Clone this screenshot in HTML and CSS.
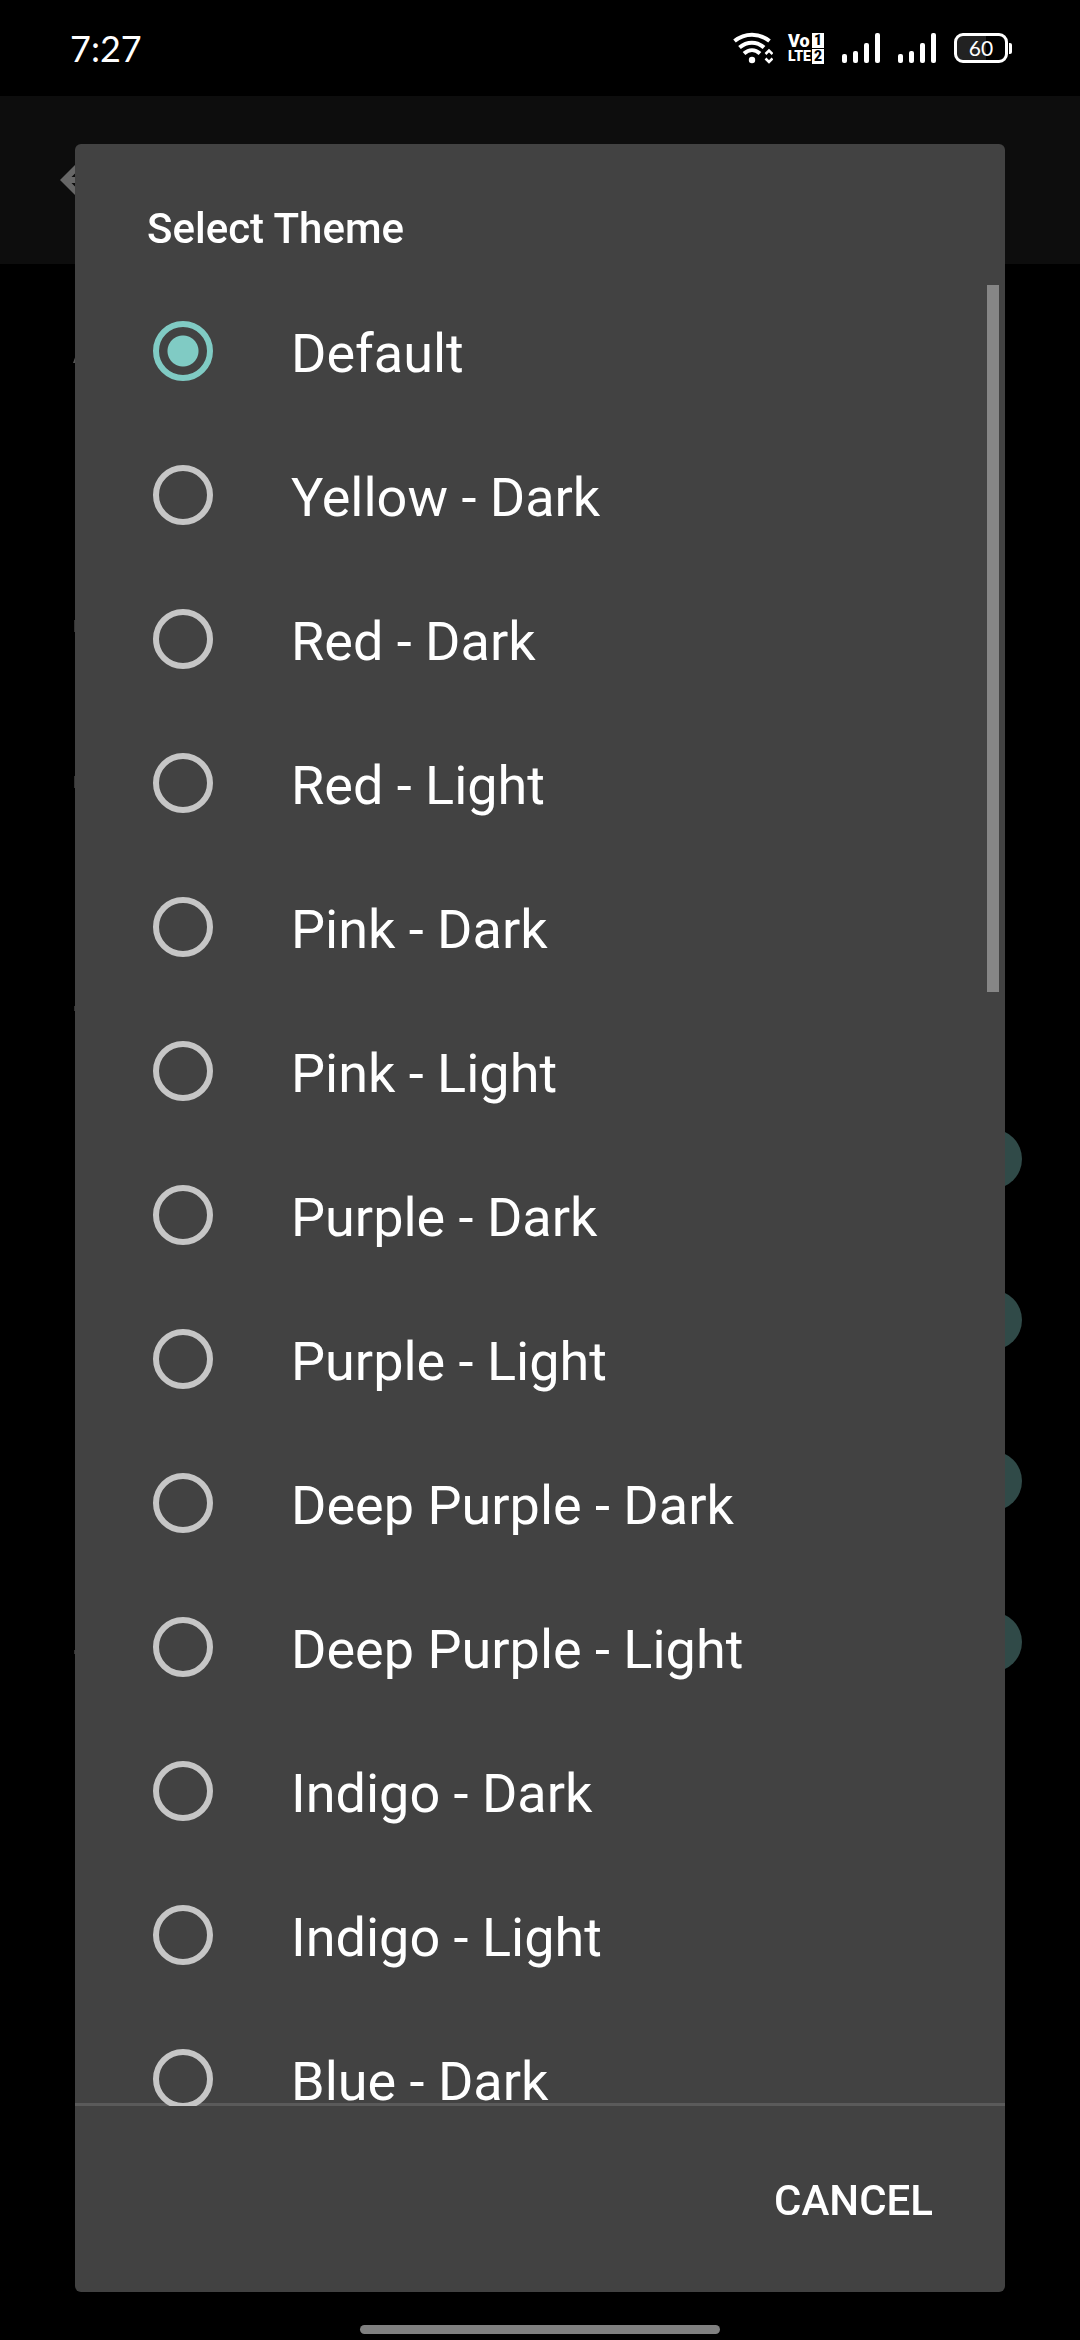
FILE: index.html
```html
<!DOCTYPE html>
<html lang="en">
<head>
<meta charset="utf-8">
<meta name="viewport" content="width=device-width, initial-scale=1">
<title>Select Theme</title>
<link rel="stylesheet" href="styles.css">
</head>
<body>
<div class="screen">
  <header class="status-bar">
    <span class="clock">7:27</span>
    <div class="status-icons">
      <svg class="wifi" width="40" height="32" viewBox="0 0 40 32" fill="none" stroke="#fff">
        <path d="M1.500 9C12 0.500 26 0.500 36.500 9M6.500 15.500C14 9 24 9 31 15.500M11 21.500C16 17 22 17 27 21.500" stroke-width="4"/>
        <circle cx="19" cy="28" r="3.200" fill="#fff" stroke="none"/>
        <path d="M32.500 22L36 18.500L39.500 22M32.500 26.500L36 30L39.500 26.500" stroke-width="2.500"/>
      </svg>
      <div class="volte">
        <span class="vo">Vo</span><span class="sim">1</span>
        <span>LTE</span><span class="sim">2</span>
      </div>
      <svg class="signal" width="38" height="30" viewBox="0 0 38 30" fill="#fff">
        <rect x="0" y="21" width="5" height="9" rx="2"/><rect x="11" y="18" width="5" height="12" rx="2"/><rect x="22" y="10" width="5" height="20" rx="2"/><rect x="33" y="0" width="5" height="30" rx="2"/>
      </svg>
      <svg class="signal" width="38" height="30" viewBox="0 0 38 30" fill="#fff">
        <rect x="0" y="21" width="5" height="9" rx="2"/><rect x="11" y="18" width="5" height="12" rx="2"/><rect x="22" y="10" width="5" height="20" rx="2"/><rect x="33" y="0" width="5" height="30" rx="2"/>
      </svg>
      <div class="battery"><span class="level">60</span></div>
    </div>
  </header>

  <div class="app-bar">
    <svg width="72" height="72" viewBox="0 0 24 24" fill="#666"><path d="M20 11H7.830l5.590-5.590L12 4l-8 8 8 8 1.410-1.410L7.830 13H20v-2z"/></svg>
  </div>
  <div class="settings">
    <svg width="4" height="1400" viewBox="0 0 4 1400" fill="#333"><path fill="#555" d="M0 99L4 88V99z"/><path d="M1 356h3v12H1zM1 512h3v12H1zM1 742h3v5H1zM1 1386h3v4H1z"/></svg>
    <div class="switches">
      <span class="thumb"></span>
      <span class="thumb"></span>
      <span class="thumb"></span>
      <span class="thumb"></span>
    </div>
  </div>
  <div class="nav-handle"></div>
</div>

<form class="dialog" role="dialog" aria-labelledby="dialog-title">
  <h1 class="title" id="dialog-title">Select Theme</h1>
  <div class="options">
    <label class="option"><input type="radio" name="theme" checked><span>Default</span></label>
    <label class="option"><input type="radio" name="theme"><span>Yellow - Dark</span></label>
    <label class="option"><input type="radio" name="theme"><span>Red - Dark</span></label>
    <label class="option"><input type="radio" name="theme"><span>Red - Light</span></label>
    <label class="option"><input type="radio" name="theme"><span>Pink - Dark</span></label>
    <label class="option"><input type="radio" name="theme"><span>Pink - Light</span></label>
    <label class="option"><input type="radio" name="theme"><span>Purple - Dark</span></label>
    <label class="option"><input type="radio" name="theme"><span>Purple - Light</span></label>
    <label class="option"><input type="radio" name="theme"><span>Deep Purple - Dark</span></label>
    <label class="option"><input type="radio" name="theme"><span>Deep Purple - Light</span></label>
    <label class="option"><input type="radio" name="theme"><span>Indigo - Dark</span></label>
    <label class="option"><input type="radio" name="theme"><span>Indigo - Light</span></label>
    <label class="option"><input type="radio" name="theme"><span>Blue - Dark</span></label>
  </div>
  <div class="scroll-thumb"></div>
  <div class="actions"><button type="button" class="cancel">CANCEL</button></div>
</form>
</body>
</html>
```
FILE: styles.css
```css
* { box-sizing: border-box; }

body {
  margin: 0;
  background: #000;
  color: #fff;
  font-family: Roboto, "Noto Sans", sans-serif;
}

.screen {
  display: flex;
  flex-direction: column;
  height: 100vh;
  overflow: hidden;
}

/* status bar */
.status-bar {
  display: flex;
  align-items: center;
  justify-content: space-between;
  flex: none;
  height: 96px;
  padding: 0 67px 0 70px;
}
.clock {
  font-family: Lato, sans-serif;
  font-size: 36px;
  line-height: 44px;
}
.status-icons {
  display: flex;
  align-items: center;
  gap: 18px;
}
.wifi { margin-right: -3px; }
.volte {
  display: grid;
  grid-template-columns: 24px 12px;
  row-gap: 1px;
  font-family: "Liberation Sans Narrow", Roboto, sans-serif;
  font-size: 14px;
  font-weight: 900;
  line-height: 15px;
}
.vo { font-size: 18px; }
.sim {
  background: #fff;
  color: #000;
  text-align: center;
}
.battery {
  position: relative;
  display: flex;
  align-items: center;
  justify-content: center;
  width: 54px;
  height: 30px;
  margin-right: 5px;
  border: 3px solid #fff;
  border-radius: 9px;
  background: linear-gradient(90deg, #222 60%, #000 60%);
}
.battery::after {
  content: "";
  position: absolute;
  right: -7px;
  width: 3px;
  height: 11px;
  border-radius: 0 2px 2px 0;
  background: #fff;
}
.level {
  font-family: Lato, sans-serif;
  font-size: 21px;
  line-height: 24px;
}

/* dimmed settings page */
.app-bar {
  display: flex;
  align-items: flex-start;
  flex: none;
  height: 168px;
  padding: 48px;
  background: #0d0d0d;
}
.settings {
  display: flex;
  align-items: flex-start;
  justify-content: space-between;
  padding: 0 58px 0 73px;
}
.switches {
  display: flex;
  flex-direction: column;
  gap: 101px;
  padding-top: 865px;
}
.thumb {
  width: 60px;
  height: 60px;
  border-radius: 50%;
  background: #304a48;
}
.nav-handle {
  align-self: center;
  flex: none;
  width: 360px;
  height: 9px;
  margin: auto 0 6px;
  border-radius: 5px;
  background: #808080;
}

/* theme dialog */
.dialog {
  position: fixed;
  inset: 144px 75px 48px;
  display: flex;
  flex-direction: column;
  overflow: hidden;
  border-radius: 6px;
  background: #424242;
}
.title {
  flex: none;
  height: 135px;
  margin: 0;
  padding: 60px 72px 0;
  font-size: 42px;
  font-weight: 500;
  line-height: 50px;
}
.options {
  flex: 1;
  min-height: 0;
  overflow-y: auto;
  scrollbar-width: none;
  box-shadow: inset 0 -3px #5a5a5a;
}
.option {
  display: flex;
  align-items: center;
  gap: 78px;
  height: 144px;
  padding: 0 78px;
  font-size: 54px;
  line-height: 64px;
}
.option span { padding-top: 5px; }
.option input {
  appearance: none;
  flex: none;
  width: 60px;
  height: 60px;
  margin: 0;
  border: 6px solid #c6c6c6;
  border-radius: 50%;
}
.option input:checked {
  border-color: #80cbc4;
  background: radial-gradient(circle, #80cbc4 15px, transparent 16px);
}
.scroll-thumb {
  position: absolute;
  top: 141px;
  right: 6px;
  width: 12px;
  height: 707px;
  background: #868686;
}
.actions {
  display: flex;
  align-items: center;
  justify-content: flex-end;
  flex: none;
  height: 186px;
  padding: 3px 48px 0;
}
.cancel {
  padding: 24px;
  border: 0;
  background: none;
  color: #fff;
  font: 500 42px/50px Roboto, sans-serif;
}
```
